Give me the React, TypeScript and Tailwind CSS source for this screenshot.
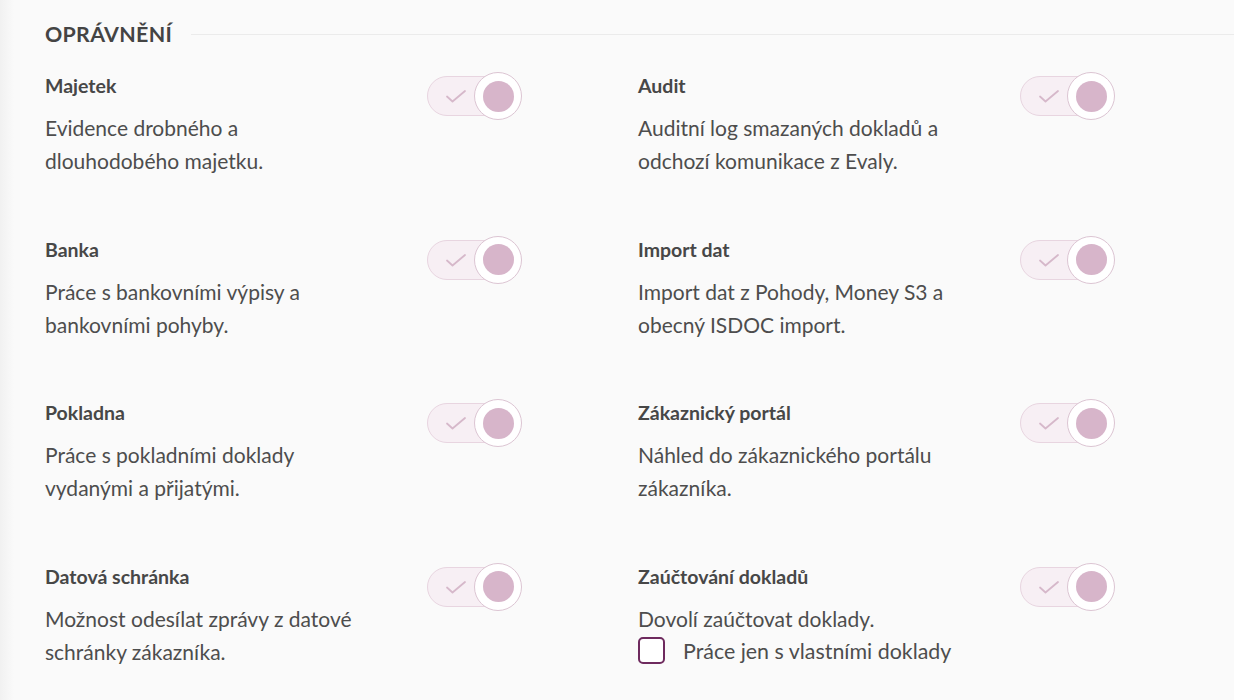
import React from "react";

type Item = { title: string; desc: string[]; checkbox?: string };

const rows: [Item, Item][] = [
  [
    { title: "Majetek", desc: ["Evidence drobného a", "dlouhodobého majetku."] },
    { title: "Audit", desc: ["Auditní log smazaných dokladů a", "odchozí komunikace z Evaly."] },
  ],
  [
    { title: "Banka", desc: ["Práce s bankovními výpisy a", "bankovními pohyby."] },
    { title: "Import dat", desc: ["Import dat z Pohody, Money S3 a", "obecný ISDOC import."] },
  ],
  [
    { title: "Pokladna", desc: ["Práce s pokladními doklady", "vydanými a přijatými."] },
    { title: "Zákaznický portál", desc: ["Náhled do zákaznického portálu", "zákazníka."] },
  ],
  [
    { title: "Datová schránka", desc: ["Možnost odesílat zprávy z datové", "schránky zákazníka."] },
    {
      title: "Zaúčtování dokladů",
      desc: ["Dovolí zaúčtovat doklady."],
      checkbox: "Práce jen s vlastními doklady",
    },
  ],
];

function Toggle() {
  return (
    <div className="relative w-[96px] h-[50px] shrink-0">
      <div className="absolute left-0 top-[5px] w-[84px] h-[40px] rounded-full border border-[#e8d5e0] bg-[#f7eff4]">
        <svg
          className="absolute left-[17px] top-[12px]"
          width="22"
          height="14"
          viewBox="0 0 22 14"
          fill="none"
        >
          <path d="M2 7.5 L7.5 12.5 L20 2" stroke="#d6b8ca" strokeWidth="1.8" strokeLinecap="round" strokeLinejoin="round" />
        </svg>
      </div>
      <div className="absolute right-[1px] top-[1px] w-[48px] h-[48px] rounded-full bg-white border border-[#dcc5d3] flex items-center justify-center">
        <div className="w-[31px] h-[31px] rounded-full bg-[#d7b5ca]" />
      </div>
    </div>
  );
}

function Cell({ item }: { item: Item }) {
  return (
    <div className="flex items-start">
      <div className="w-[382px] shrink-0 pt-[3px]">
        <div className="text-[19.5px] leading-[24px] font-bold text-[#474747]">{item.title}</div>
        <div className="mt-[13px] text-[21px] leading-[33px] text-[#4d4d4d]">
          {item.desc.map((d, i) => (
            <div key={i} className="whitespace-nowrap">{d}</div>
          ))}
        </div>
        {item.checkbox && (
          <div className="flex items-center mt-[1px]">
            <div className="w-[27px] h-[27px] rounded-[5px] border-2 border-[#6e2a5e] bg-white shrink-0" />
            <span className="ml-[18px] text-[21.4px] leading-[30px] text-[#4d4d4d] whitespace-nowrap">{item.checkbox}</span>
          </div>
        )}
      </div>
      <Toggle />
    </div>
  );
}

export default function App() {
  return (
    <div
      className="w-[1234px] h-[700px] overflow-hidden bg-[linear-gradient(to_right,#f1f1f1,#fafafa_14px)]"
      style={{ fontFamily: "Lato, 'Noto Sans', sans-serif" }}
    >
      <div className="pl-[45px] pt-[22px]">
        <div className="flex items-center h-[24px]">
          <span className="text-[21.4px] font-bold text-[#444] tracking-[0.3px]">OPRÁVNĚNÍ</span>
          <div className="flex-1 ml-[19px] h-px bg-[#ebebeb]" />
        </div>
        <div className="mt-[25px] flex flex-col">
          {rows.map((r, i) => (
            <div key={i} className="grid grid-cols-[593px_1fr] h-[163.5px]">
              <Cell item={r[0]} />
              <Cell item={r[1]} />
            </div>
          ))}
        </div>
      </div>
    </div>
  );
}
